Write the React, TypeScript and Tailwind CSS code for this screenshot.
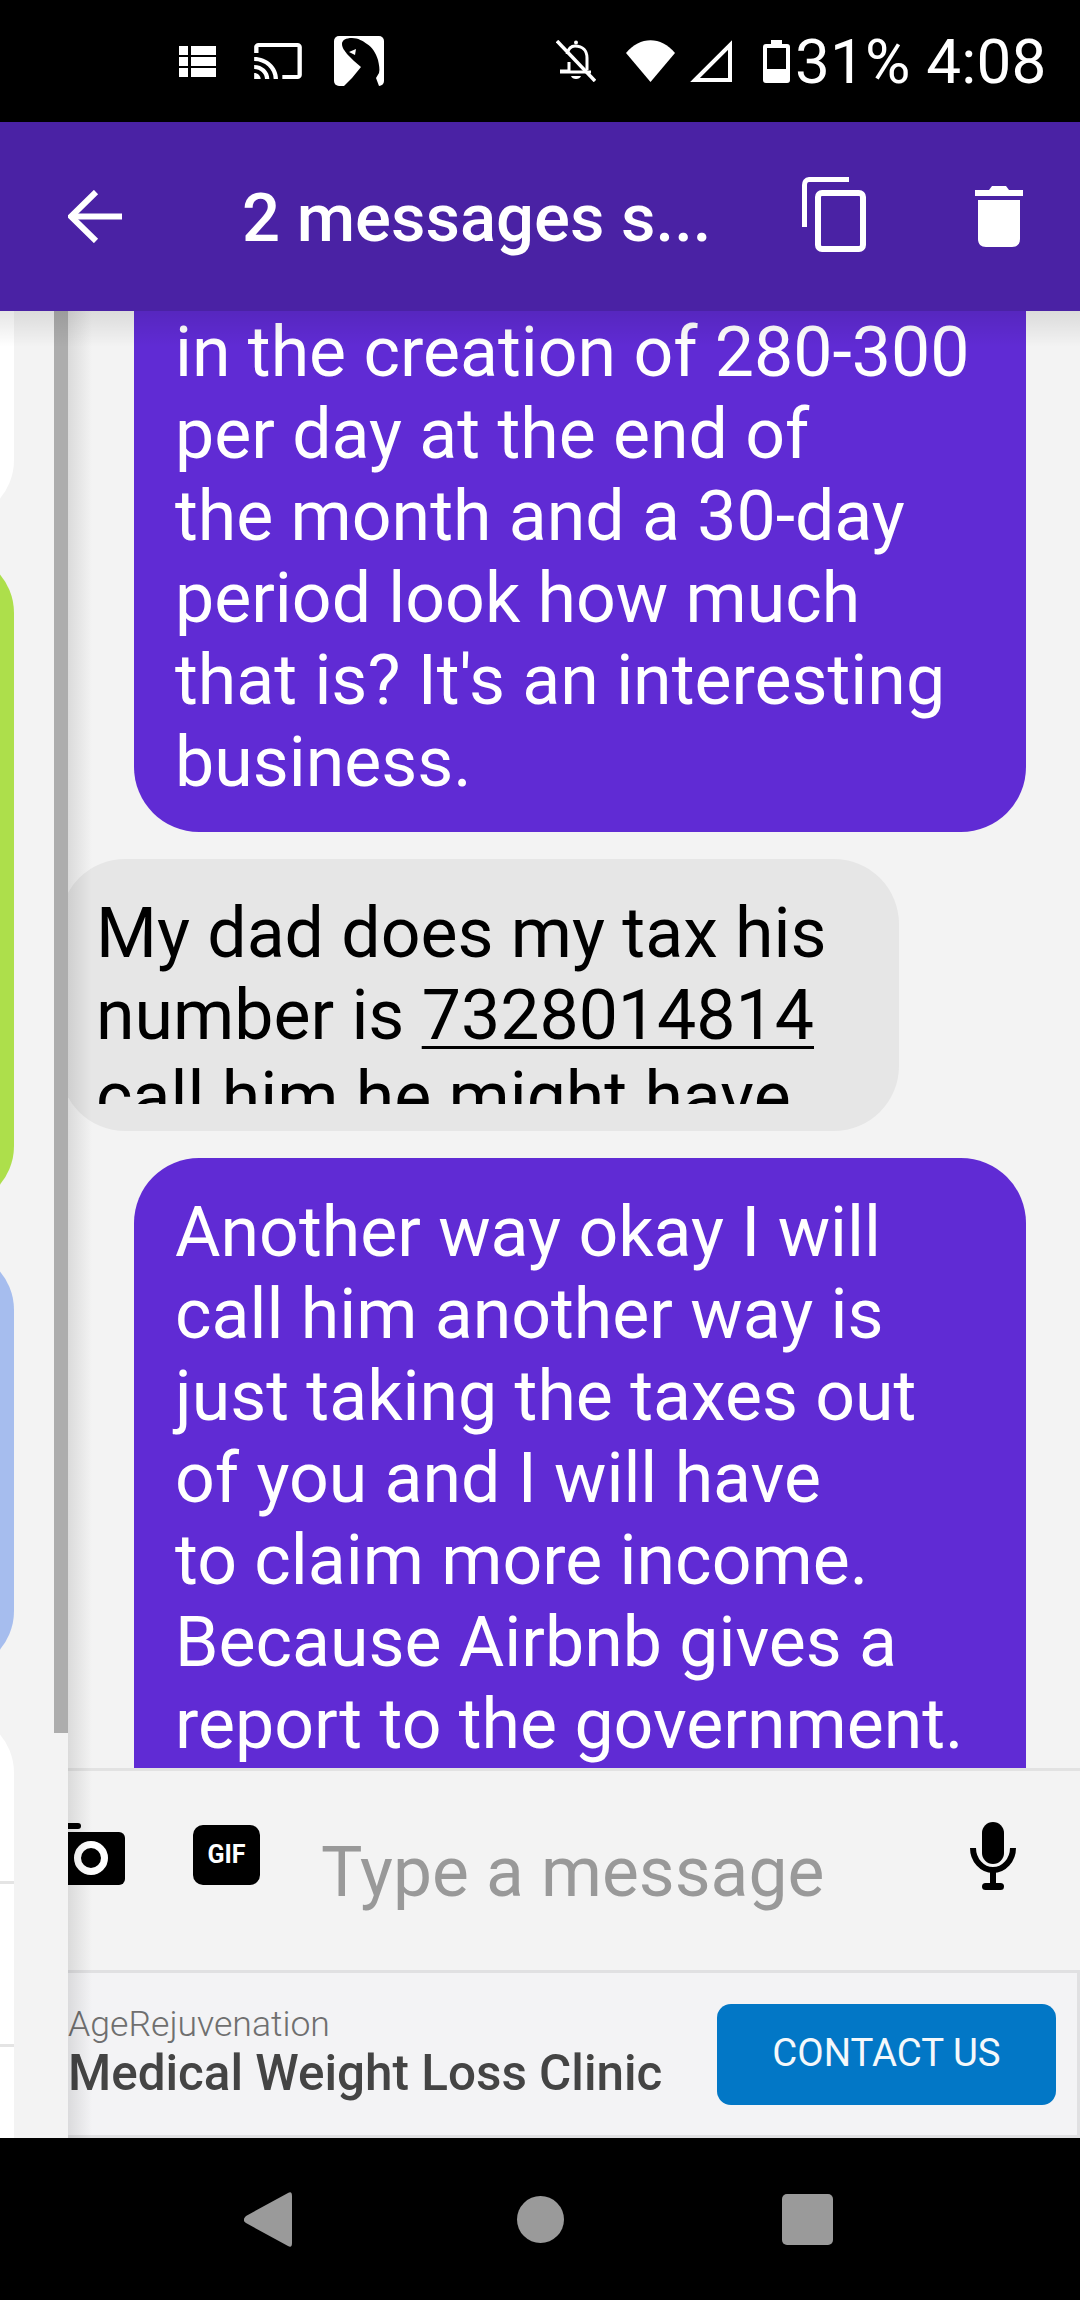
const sans = "font-['Roboto','Liberation_Sans',sans-serif]";

function StatusBar() {
  return (
    <div className={`flex h-[122px] shrink-0 items-center bg-black pl-[179px] text-white ${sans}`}>
      <svg className="h-[31px] w-[37px]" viewBox="0 0 37 31" fill="white">
        <rect x="0" y="0" width="9" height="9" />
        <rect x="12" y="0" width="25" height="9" />
        <rect x="0" y="11" width="9" height="9" />
        <rect x="12" y="11" width="25" height="9" />
        <rect x="0" y="22" width="9" height="9" />
        <rect x="12" y="22" width="25" height="9" />
      </svg>
      <svg className="ml-[36px] h-[48px] w-[52px]" viewBox="0 0 24 24" fill="white" preserveAspectRatio="none">
        <path d="M21 3H3c-1.1 0-2 .9-2 2v3h2V5h18v14h-7v2h7c1.1 0 2-.9 2-2V5c0-1.1-.9-2-2-2zM1 18v3h3c0-1.66-1.34-3-3-3zm0-4v2c2.76 0 5 2.24 5 5h2c0-3.87-3.13-7-7-7zm0-4v2c4.97 0 9 4.03 9 9h2c0-6.08-4.93-11-11-11z" />
      </svg>
      <svg className="ml-[30px] h-[50px] w-[50px]" viewBox="0 0 50 50">
        <rect width="50" height="50" rx="5" fill="white" />
        <path d="M8 8C8 4 12 2 18 2C24 2 29 5 33 8C38 11 42 17 44 24C45 29 46 33 45 37L42 42L45 50H10L18 42L27 31L20 25L13 18C11 15 8 12 8 8Z" fill="black" />
        <path d="M15 16L22 13L21 19Z" fill="white" />
      </svg>
      <svg className="ml-[172px] h-[42px] w-[40px]" viewBox="0 0 40 42" fill="none" stroke="white" strokeWidth="3">
        <path d="M19 6C14 6 12 10 11 14" />
        <path d="M19 6C27 6 31 11 31 18V30" />
        <path d="M13 22V31H4" />
        <path d="M4 32H35" />
        <path d="M1 1L39 41" strokeWidth="3.5" />
        <circle cx="20" cy="2.5" r="2" fill="white" stroke="none" />
        <path d="M15 36C16 40 24 40 25 36Z" fill="white" stroke="none" />
      </svg>
      <svg className="ml-[30px] h-[42px] w-[49px]" viewBox="0 0 49 42" fill="white">
        <path d="M0 13C14 -4 35 -4 49 13L24.5 42Z" />
      </svg>
      <svg className="ml-[15px] h-[42px] w-[42px]" viewBox="0 0 42 42" fill="none" stroke="white" strokeWidth="4">
        <path d="M5 40L40 5V40Z" />
      </svg>
      <svg className="ml-[31px] h-[43px] w-[27px]" viewBox="0 0 27 43" fill="white">
        <path fillRule="evenodd" d="M8 0H19V4H24C26 4 27 5 27 7V40C27 42 26 43 24 43H3C1 43 0 42 0 40V7C0 5 1 4 3 4H8ZM4 8V29H23V8Z" />
      </svg>
      <span className="ml-[5px] mt-[2px] whitespace-nowrap text-[62px] leading-none tracking-[0.2px]">31% 4:08</span>
    </div>
  );
}

function Header() {
  return (
    <div className={`flex h-[189px] shrink-0 items-center bg-[#4a22a4] pl-[68px] text-white ${sans}`}>
      <svg className="h-[53px] w-[54px]" viewBox="0 0 54 53" fill="none" stroke="white" strokeWidth="6">
        <path d="M54 26.5H4" />
        <path d="M28 2L3 26.5L28 51" />
      </svg>
      <div className="ml-[120px] mt-[4px] w-[560px] whitespace-nowrap text-[67px] font-medium leading-none">2 messages s...</div>
      <svg className="mt-[-4px] h-[75px] w-[64px]" viewBox="0 0 64 75" fill="none" stroke="white">
        <path d="M2.5 50V8C2.5 5 4 2.5 7 2.5H47" strokeWidth="5" />
        <rect x="16" y="16" width="45" height="56" rx="4" strokeWidth="6" />
      </svg>
      <svg className="ml-[109px] h-[61px] w-[48px]" viewBox="0 0 48 61" fill="white">
        <path d="M3 14H45V53C45 58 42 61 37 61H11C6 61 3 58 3 53Z" />
        <path d="M0 4H14L17 0H31L34 4H48V10H0Z" />
      </svg>
    </div>
  );
}

function Sidebar() {
  return (
    <div className="flex w-[54px] shrink-0 flex-col bg-[#f3f3f3]">
      <div className="ml-[-60px] mt-[-60px] h-[269px] w-[74px] shrink-0 rounded-br-[60px] bg-white" />
      <div className="ml-[-60px] mt-[33px] h-[653px] w-[74px] shrink-0 rounded-r-[60px] bg-[#addf4b]" />
      <div className="ml-[-60px] mt-[44px] h-[421px] w-[74px] shrink-0 rounded-r-[60px] bg-[#a6bdee]" />
      <div className="ml-[-60px] mt-[42px] flex w-[74px] flex-1 flex-col rounded-tr-[60px] bg-white">
        <div className="mt-[168px] h-[3px] bg-[#e4e4e4]" />
        <div className="mt-[160px] h-[3px] bg-[#e4e4e4]" />
      </div>
    </div>
  );
}

function Messages() {
  return (
    <div className={`h-[1457px] overflow-hidden text-[69.8px] leading-[82px] ${sans}`}>
      <div className="ml-[66px] mt-[-40px] w-[892px] rounded-b-[65px] bg-[#602bd4] pb-[29px] pl-[41px] pt-[40px] text-white">
        in the creation of 280-300
        <br />
        per day at the end of
        <br />
        the month and a 30-day
        <br />
        period look how much
        <br />
        that is? It's an interesting
        <br />
        business.
      </div>
      <div className="ml-[-8px] mt-[27px] w-[839px] rounded-[65px] bg-[#e6e6e6] pb-[27px] pl-[36px] pt-[33px] text-black">
        <div className="h-[212px] overflow-hidden whitespace-nowrap">
          My dad does my tax his
          <br />
          number is <span className="underline decoration-[3px] underline-offset-[7px]">7328014814</span>
          <br />
          call him he might have
        </div>
      </div>
      <div className="ml-[66px] mt-[27px] w-[892px] rounded-t-[65px] bg-[#602bd4] pb-[40px] pl-[41px] pt-[33px] text-white">
        Another way okay I will
        <br />
        call him another way is
        <br />
        just taking the taxes out
        <br />
        of you and I will have
        <br />
        to claim more income.
        <br />
        Because Airbnb gives a
        <br />
        report to the government.
      </div>
    </div>
  );
}

function Composer() {
  return (
    <div className={`flex h-[202px] items-start border-t-[3px] border-[#e2e2e2] bg-[#f3f3f3] pt-[52px] ${sans}`}>
      <svg className="h-[62px] w-[57px] shrink-0" viewBox="0 0 57 62">
        <rect x="-12" y="9" width="69" height="53" rx="6" fill="black" />
        <rect x="-8" y="0" width="21" height="6" rx="3" fill="black" />
        <circle cx="23" cy="35" r="13.5" fill="none" stroke="white" strokeWidth="7" />
      </svg>
      <div className="ml-[68px] mt-[2px] flex h-[60px] w-[67px] items-center justify-center rounded-[10px] bg-black text-[25px] font-bold text-white">GIF</div>
      <div className="ml-[61px] mt-[9px] whitespace-nowrap text-[69.5px] leading-[82px] text-[#999999]">Type a message</div>
      <svg className="ml-auto mr-[64px] mt-[-1px] h-[68px] w-[46px] shrink-0" viewBox="0 0 46 68" fill="none" stroke="black">
        <rect x="12" y="0" width="22" height="42" rx="11" fill="black" stroke="none" />
        <path d="M3 26C3 38 12 48 23 48C34 48 43 38 43 26" strokeWidth="6" />
        <path d="M23 48V62" strokeWidth="6" />
        <rect x="12" y="61" width="22" height="7" rx="3.5" fill="black" stroke="none" />
      </svg>
    </div>
  );
}

function AdBanner() {
  return (
    <div className={`flex h-[168px] items-center justify-between border-y-[3px] border-r-[3px] border-[#e0e0e2] bg-[#f3f3f5] ${sans}`}>
      <div className="mt-[-6px] whitespace-nowrap">
        <div className="text-[35.6px] font-light leading-[44px] text-[#6f6f6f]">AgeRejuvenation</div>
        <div className="text-[49.4px] font-medium leading-[54px] text-[#444444]">Medical Weight Loss Clinic</div>
      </div>
      <div className="mr-[21px] flex h-[101px] w-[339px] items-center justify-center rounded-[14px] bg-[#0277c6] pb-[2px] text-[38.4px] text-[#f4f8fb]">CONTACT US</div>
    </div>
  );
}

function NavBar() {
  return (
    <div className="flex h-[162px] shrink-0 items-start bg-black pl-[244px] pt-[54px]">
      <svg className="h-[55px] w-[48px]" viewBox="0 0 48 55" fill="#9a9a9a">
        <path d="M44 1C47 -1 48 1 48 4V51C48 54 47 56 44 54L2 31C-1 29 -1 27 2 24Z" />
      </svg>
      <div className="ml-[225px] mt-[4px] h-[47px] w-[47px] rounded-full bg-[#9a9a9a]" />
      <div className="ml-[218px] mt-[2px] h-[51px] w-[51px] rounded-[5px] bg-[#9a9a9a]" />
    </div>
  );
}

export default function App() {
  return (
    <div className="flex h-[2300px] w-[1080px] flex-col overflow-hidden bg-[#f3f3f3]">
      <StatusBar />
      <Header />
      <div className="relative flex min-h-0 flex-1 overflow-hidden">
        <Sidebar />
        {/* scrollbar thumb, the lower part is empty track */}
        <div className="w-[14px] shrink-0 bg-[#f3f3f3]">
          <div className="h-[1422px] bg-[#adadad]" />
        </div>
        <div className="min-w-0 flex-1">
          <Messages />
          <Composer />
          <AdBanner />
        </div>
        {/* drawer and toolbar shadows */}
        <div className="pointer-events-none absolute inset-y-0 left-[68px] w-[24px] bg-gradient-to-r from-black/10 to-transparent" />
        <div className="pointer-events-none absolute inset-x-0 top-0 h-[36px] bg-gradient-to-b from-black/10 to-transparent" />
      </div>
      <NavBar />
    </div>
  );
}
